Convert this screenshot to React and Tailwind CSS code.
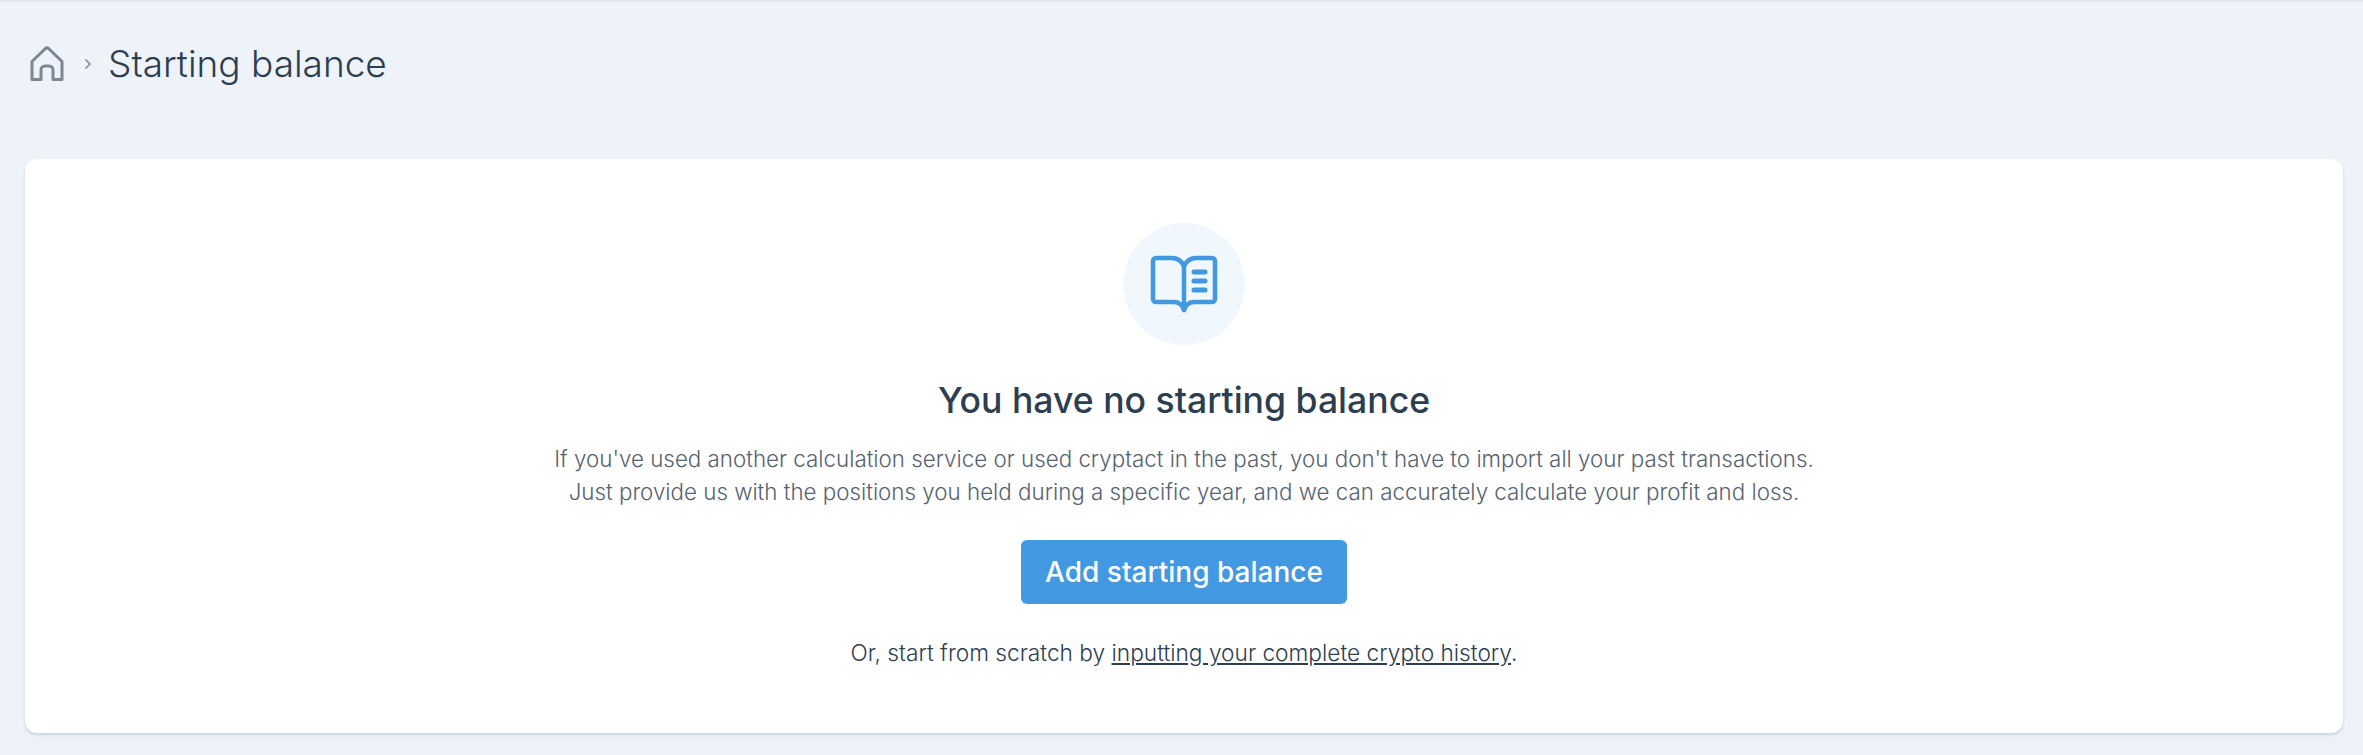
export default function App() {
    return (
        <div className="min-h-[755px] bg-[#eef3fa] border-t-2 border-[#e4e8ee] font-['Inter',sans-serif]">
            {/* Breadcrumb */}
            <div className="flex items-center h-[125px] pl-[30px] pb-[1px]">
                <svg width="34" height="36" viewBox="0 0 34 36" fill="none" stroke="#7b8792" strokeWidth="3" strokeLinejoin="round" className="mr-[20px] mb-[1px]">
                    <path d="M2 15.5 L15.5 2.5 Q17 1.2 18.5 2.5 L32 15.5 V33.5 H23 V24 A4 4 0 0 0 19 20 H15 A4 4 0 0 0 11 24 V33.5 H2 Z" />
                </svg>
                <svg width="8" height="12" viewBox="0 0 8 12" fill="none" stroke="#7b8792" strokeWidth="1.5" className="mr-[16px]">
                    <path d="M1.5 1.5 L6 6 L1.5 10.5" />
                </svg>
                <span className="text-[37px] font-light text-[#2d3e50]">Starting balance</span>
            </div>

            {/* Empty state card */}
            <div className="ml-[25px] mr-[20px] mt-[32px] h-[574px] rounded-[12px] bg-white shadow-[0_2px_3px_rgba(120,135,160,0.3)] flex flex-col items-center pt-[64px]">
                <div className="w-[122px] h-[122px] rounded-full bg-[#f0f7fd] flex items-center justify-center">
                    <svg width="68" height="60" viewBox="0 0 68 60" fill="none" stroke="#4299e1" strokeWidth="4.5" strokeLinecap="round" strokeLinejoin="round">
                        <path d="M34 12 C31 6 27 4 22 4 H6 A3 3 0 0 0 3 7 V45 A3 3 0 0 0 6 48 H24 C29 48 32 50 34 56 C36 50 39 48 44 48 H62 A3 3 0 0 0 65 45 V7 A3 3 0 0 0 62 4 H46 C41 4 37 6 34 12 Z" />
                        <path d="M34 12 V56" />
                        <path d="M44 18 H55 M44 27 H55 M44 36 H55" strokeWidth="5" />
                    </svg>
                </div>
                <h2 className="mt-[31px] text-[35.6px] leading-[50px] font-medium text-[#2d3e50]">You have no starting balance</h2>
                <p className="mt-[16px] text-center text-[22.35px] leading-[33px] font-light text-[#566372]">
                    If you've used another calculation service or used cryptact in the past, you don't have to import all your past transactions.
                    <br />
                    Just provide us with the positions you held during a specific year, and we can accurately calculate your profit and loss.
                </p>
                <button className="mt-[32px] w-[326px] h-[64px] rounded-[6px] bg-[#4299e1] text-white text-[28px] font-medium">Add starting balance</button>
                <p className="mt-[30px] text-[22.7px] leading-[37px] font-light text-[#2d3e50]">
                    Or, start from scratch by <a className="underline">inputting your complete crypto history</a>.
                </p>
            </div>
        </div>
    );
}
